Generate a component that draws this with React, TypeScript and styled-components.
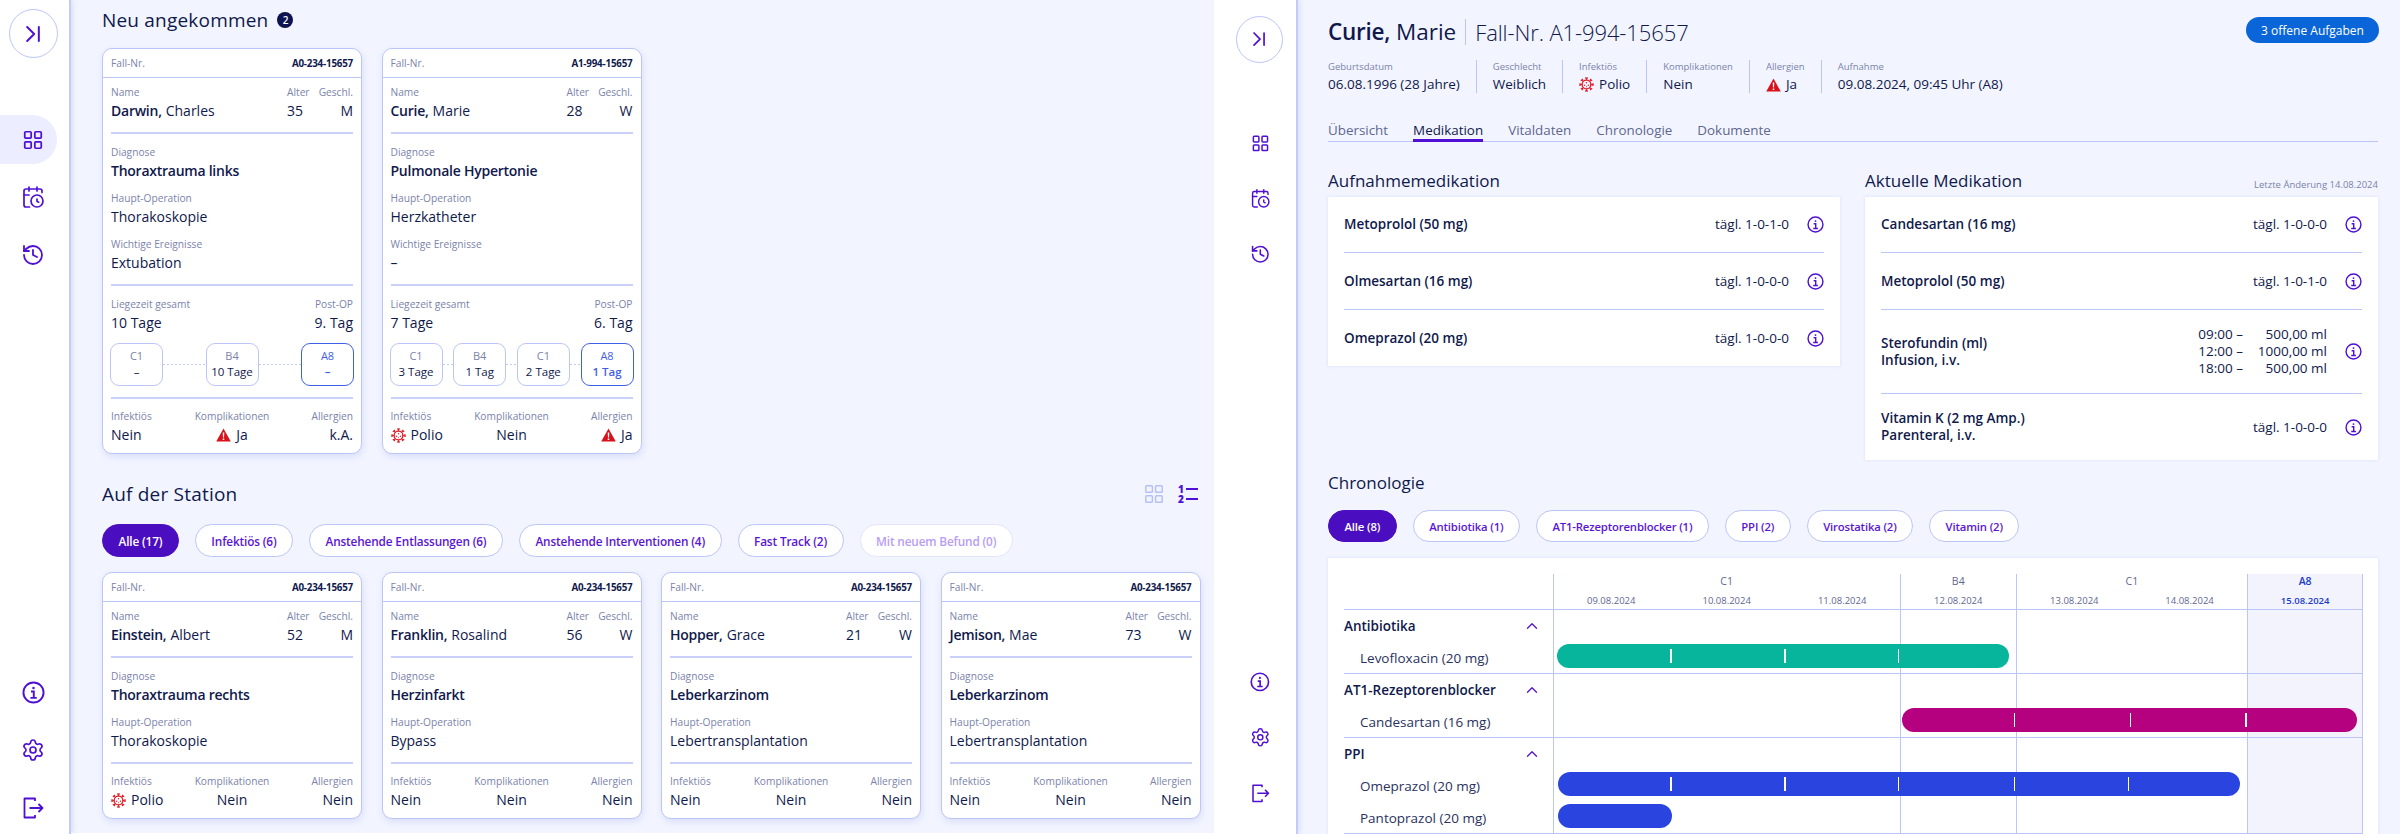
import React from "react";
import styled, { createGlobalStyle } from "styled-components";
import { CalendarClock, ChevronLast, ChevronUp, History, LayoutGrid, Settings } from "lucide-react";

const FONT = `"Open Sans", "Noto Sans", "Liberation Sans", sans-serif`;
const NAVY = "#10194c";
const LABEL = "#7b83aa";
const LINE = "#bcc5f8";
const PURPLE = "#4f10d4";
const BG = "#f2f5ff";

const Global = createGlobalStyle`
  html, body { margin: 0; padding: 0; background: #fff; }
  body { font-family: ${FONT}; color: ${NAVY}; width: 2400px; height: 834px; overflow: hidden; }
  * { box-sizing: border-box; }
`;

const Page = styled.div`
  display: flex;
  width: 2400px;
  height: 834px;
  overflow: hidden;
`;

const Panel = styled.section<{ $w: number }>`
  display: flex;
  flex: 0 0 ${(p) => p.$w}px;
  height: 100%;
  overflow: hidden;
`;

const Side = styled.aside<{ $w: number; $top: number; $bottom: number }>`
  flex: 0 0 ${(p) => p.$w}px;
  min-width: 0;
  display: flex;
  flex-direction: column;
  padding-top: ${(p) => p.$top}px;
  padding-bottom: ${(p) => p.$bottom}px;
  background: #fff;
  border-right: 2px solid #c3cbf7;
  box-shadow: 2px 0 5px rgba(120, 130, 220, 0.18);
  z-index: 1;
`;

const Collapse = styled.button<{ $d: number; $x: number }>`
  width: ${(p) => p.$d}px;
  height: ${(p) => p.$d}px;
  margin-left: ${(p) => p.$x}px;
  border: 1.5px solid ${LINE};
  border-radius: 50%;
  background: #fff;
  color: ${PURPLE};
  display: flex;
  align-items: center;
  justify-content: center;
  padding: 0;
`;

const Nav = styled.nav<{ $gap: number; $mt?: number; $auto?: boolean }>`
  display: flex;
  flex-direction: column;
  gap: ${(p) => p.$gap}px;
  margin-top: ${(p) => (p.$auto ? "auto" : `${p.$mt}px`)};
`;

const NavItem = styled.div<{ $active?: boolean; $w: number; $h: number; $pl: number }>`
  width: ${(p) => p.$w}px;
  height: ${(p) => p.$h}px;
  padding-left: ${(p) => p.$pl}px;
  display: flex;
  align-items: center;
  justify-content: center;
  color: ${PURPLE};
  background: ${(p) => (p.$active ? "#ecedfe" : "transparent")};
  border-radius: 0 25px 25px 0;
`;

const Main = styled.main`
  flex: 1;
  min-width: 0;
  background: ${BG};
`;

const LeftMain = styled(Main)`
  padding: 7px 0 0 31px;
  height: 833px;
`;

const SectionHead = styled.div`
  display: flex;
  align-items: center;
  height: 26px;
  gap: 9px;
`;

const H1 = styled.h2`
  margin: 0;
  font-size: 19px;
  line-height: 26px;
  font-weight: 400;
  color: ${NAVY};
  letter-spacing: 0.2px;
`;

const CountBadge = styled.span`
  width: 16px;
  height: 16px;
  border-radius: 50%;
  background: #0c1350;
  color: #fff;
  font-size: 10px;
  font-weight: 600;
  display: flex;
  align-items: center;
  justify-content: center;
`;

const CardRow = styled.div`
  display: flex;
  gap: 19.5px;
  margin-top: 15px;
`;

const Card = styled.article`
  width: 260px;
  background: #fff;
  border: 1px solid ${LINE};
  border-radius: 10px;
  box-shadow: 1px 3px 7px rgba(110, 120, 210, 0.18);
`;

const CardHeader = styled.header`
  height: 29px;
  padding: 0 8px;
  border-bottom: 1px solid ${LINE};
  display: flex;
  align-items: center;
  justify-content: space-between;
`;

const Label = styled.div<{ $align?: string }>`
  font-size: 10.2px;
  line-height: 14px;
  color: ${LABEL};
  white-space: nowrap;
  text-align: ${(p) => p.$align || "left"};
`;

const CaseNo = styled.span`
  font-size: 9.8px;
  font-weight: 700;
  letter-spacing: -0.2px;
  color: ${NAVY};
`;

const Value = styled.div<{ $align?: string; $strong?: boolean }>`
  font-size: 14px;
  line-height: 20px;
  margin-top: 2px;
  color: ${NAVY};
  font-weight: ${(p) => (p.$strong ? 600 : 400)};
  letter-spacing: ${(p) => (p.$strong ? "-0.25px" : "0")};
  white-space: nowrap;
  text-align: ${(p) => p.$align || "left"};
  display: flex;
  align-items: center;
  gap: 5px;
  justify-content: ${(p) => (p.$align === "right" ? "flex-end" : p.$align === "center" ? "center" : "flex-start")};
`;

const Strong = styled.b`
  font-weight: 600;
  letter-spacing: -0.25px;
`;

const NameValue = styled(Value)`
  gap: 4px;
`;

const NameGrid = styled.div`
  display: grid;
  grid-template-columns: 1fr 33px 33px;
  padding: 7px 8px 11px;
  & > div:nth-child(3n) { justify-self: end; }
`;

const Block = styled.div<{ $pt?: number; $pb?: number }>`
  margin: 0 8px;
  padding: ${(p) => p.$pt ?? 11}px 0 ${(p) => p.$pb ?? 11}px;
  border-top: 2px solid #c9d0fb;
`;

const Field = styled.div`
  & + & { margin-top: 10px; }
`;

const Split = styled.div`
  display: flex;
  justify-content: space-between;
`;

const Stations = styled.div`
  display: flex;
  align-items: center;
  margin: 10px -1px 0;
`;

const Link = styled.span`
  flex: 1;
  height: 1.5px;
  background: repeating-linear-gradient(90deg, #c2caf9 0 2px, transparent 2px 4px);
`;

const Stop = styled.div<{ $on?: boolean }>`
  flex: 0 0 53px;
  height: 43px;
  border: ${(p) => (p.$on ? "1.5px solid #3f5fe6" : `1px solid ${LINE}`)};
  border-radius: 9px;
  text-align: center;
  color: ${(p) => (p.$on ? "#3f5fe6" : LABEL)};
  font-size: 11px;
  line-height: 14px;
  padding-top: 5px;
`;

const StopVal = styled.div<{ $on?: boolean }>`
  font-size: 11.5px;
  line-height: 18px;
  color: ${(p) => (p.$on ? "#3f5fe6" : NAVY)};
  font-weight: ${(p) => (p.$on ? 600 : 400)};
`;

const Triple = styled.div`
  display: grid;
  grid-template-columns: 1fr auto 1fr;
  margin: 0 8px;
  padding: 10px 0 8px;
  border-top: 2px solid #c9d0fb;
`;

const HeadRow = styled(SectionHead)`
  margin-top: 27px;
  justify-content: space-between;
  padding-right: 3px;
  width: 1099px;
`;

const Toggles = styled.div`
  display: flex;
  align-items: center;
  gap: 15px;
`;

const NumList = styled.div`
  width: 20px;
  display: grid;
  grid-template-columns: 8px 12px;
  grid-auto-rows: 10px;
  align-items: center;
  font-size: 10px;
  line-height: 10px;
  font-weight: 800;
  color: ${PURPLE};
`;

const NumLine = styled.i`
  display: block;
  height: 1.5px;
  background: ${PURPLE};
`;

const Pills = styled.div<{ $mt: number; $gap: number }>`
  display: flex;
  gap: ${(p) => p.$gap}px;
  margin-top: ${(p) => p.$mt}px;
`;

const Pill = styled.button<{ $on?: boolean; $off?: boolean; $h: number; $fs: number }>`
  height: ${(p) => p.$h}px;
  padding: 0 15.5px;
  border-radius: 20px;
  font-family: ${FONT};
  font-size: ${(p) => p.$fs}px;
  font-weight: 600;
  letter-spacing: -0.15px;
  white-space: nowrap;
  border: 1.5px solid ${(p) => (p.$on ? "#4b0dc0" : p.$off ? "#e2e5fb" : LINE)};
  background: ${(p) => (p.$on ? "#4b0dc0" : "#fff")};
  color: ${(p) => (p.$on ? "#fff" : p.$off ? "#b89df4" : "#5a16d4")};
`;

const RightMain = styled(Main)`
  padding: 17px 22px 0 30px;
  height: 834px;
`;

const TitleRow = styled.div`
  display: flex;
  justify-content: space-between;
  align-items: flex-start;
`;

const Title = styled.h1`
  margin: 0;
  font-size: 22.5px;
  line-height: 30px;
  font-weight: 400;
  display: flex;
  align-items: center;
  color: ${NAVY};
`;

const TitleCase = styled.span`
  font-weight: 300;
  font-size: 22px;
  letter-spacing: -0.1px;
  margin-left: 9px;
  padding-left: 9px;
  border-left: 1px solid ${LINE};
  line-height: 26px;
`;

const TaskBadge = styled.span`
  height: 26px;
  width: 133px;
  margin-right: -1px;
  border-radius: 13px;
  background: #0a66d8;
  color: #fff;
  font-size: 12px;
  font-weight: 500;
  display: flex;
  align-items: center;
  justify-content: center;
`;

const Meta = styled.div`
  display: flex;
  margin-top: 13px;
`;

const MetaCol = styled.div`
  height: 33px;
  padding: 0 16px;
  border-left: 1px solid ${LINE};
  &:first-child { padding-left: 0; border-left: 0; }
`;

const MetaLabel = styled(Label)`
  font-size: 9.5px;
`;

const MetaValue = styled(Value)`
  font-size: 13.5px;
  line-height: 19px;
  margin-top: 1px;
`;

const Tabs = styled.div`
  display: flex;
  gap: 25px;
  margin-top: 27px;
  border-bottom: 1px solid ${LINE};
`;

const Tab = styled.div<{ $on?: boolean }>`
  font-size: 13.4px;
  line-height: 20px;
  color: ${(p) => (p.$on ? NAVY : "#5f678f")};
  font-weight: ${(p) => (p.$on ? 500 : 400)};
  box-shadow: ${(p) => (p.$on ? `0 1px 0 ${PURPLE}, inset 0 -2px 0 ${PURPLE}` : "none")};
  height: 21px;
`;

const MedColumns = styled.div`
  display: grid;
  grid-template-columns: 512px 513px;
  column-gap: 25px;
  align-items: start;
  margin-top: 27px;
`;

const H2Row = styled.div`
  display: flex;
  justify-content: space-between;
  align-items: flex-end;
  height: 24px;
`;

const ChronoHead = styled(H2Row)`
  margin-top: 11px;
`;

const H2 = styled.h3`
  margin: 0;
  font-size: 17px;
  line-height: 24px;
  font-weight: 400;
  color: ${NAVY};
`;

const Stamp = styled(Label)`
  font-size: 9.5px;
  line-height: 16px;
`;

const MedCard = styled.div`
  margin-top: 4px;
  background: #fff;
  padding: 0 16px;
  box-shadow: 0 0 3px rgba(140, 150, 220, 0.25);
`;

const MedRow = styled.div`
  min-height: 55px;
  padding: 16px 0;
  display: flex;
  align-items: center;
  gap: 18px;
  font-size: 13.5px;
  line-height: 17px;
  & + & { border-top: 1px solid ${LINE}; min-height: 57px; }
`;

const MedName = styled.div`
  flex: 1;
  font-weight: 600;
`;

const Times = styled.div`
  display: grid;
  grid-template-columns: auto 84px;
  text-align: right;
`;

const ChartBox = styled.div`
  margin-top: 16px;
  background: #fff;
  padding: 16px 15px 0 16px;
  box-shadow: 0 0 3px rgba(140, 150, 220, 0.25);
`;

const ChartHead = styled.div`
  display: grid;
  grid-template-columns: 208.5px 3fr 1fr 2fr 1fr;
  height: 36px;
  border-bottom: 1px solid ${LINE};
`;

const WardHead = styled.div<{ $on?: boolean; $end?: boolean }>`
  border-left: 1px solid ${LINE};
  border-right: ${(p) => (p.$end ? `1px solid ${LINE}` : "0")};
  background: ${(p) => (p.$on ? "#f2f3fd" : "transparent")};
  color: ${(p) => (p.$on ? "#1c3cc8" : "#5f678f")};
  font-weight: ${(p) => (p.$on ? 600 : 400)};
  text-align: center;
  font-size: 10.5px;
  line-height: 14px;
  padding-top: 0;
`;

const Days = styled.div`
  display: flex;
  margin-top: 6px;
  font-size: 9.5px;
  & > span { flex: 1; }
`;

const ChartRow = styled.div<{ $end?: boolean }>`
  display: flex;
  height: 32px;
  border-bottom: ${(p) => (p.$end ? `1px solid ${LINE}` : "0")};
`;

const RowLabel = styled.div<{ $group?: boolean }>`
  flex: 0 0 208.5px;
  display: flex;
  align-items: center;
  justify-content: space-between;
  padding-left: ${(p) => (p.$group ? 0 : 16)}px;
  padding-right: 12px;
  font-size: 13.5px;
  font-weight: ${(p) => (p.$group ? 600 : 400)};
  color: ${(p) => (p.$group ? NAVY : "#2a3160")};
  white-space: nowrap;
`;

const Track = styled.div`
  flex: 1;
  position: relative;
`;

const Guides = styled.div`
  position: absolute;
  inset: 0;
  display: grid;
  grid-template-columns: 3fr 1fr 2fr 1fr;
`;

const Guide = styled.div<{ $on?: boolean; $end?: boolean }>`
  border-left: 1px solid ${LINE};
  border-right: ${(p) => (p.$end ? `1px solid ${LINE}` : "0")};
  background: ${(p) => (p.$on ? "#f2f3fd" : "transparent")};
`;

const Bar = styled.div<{ $c: string }>`
  position: absolute;
  top: 2px;
  height: 24px;
  border-radius: 12px;
  background: ${(p) => p.$c};
`;

const Tick = styled.i`
  position: absolute;
  top: 5px;
  width: 1.5px;
  height: 14px;
  background: #fff;
`;

const Warning = () => (
  <svg width="15" height="14" viewBox="0 0 15 14" aria-hidden>
    <path d="M7.5 0.5 14.8 13.6H0.2Z" fill="#d8111b" />
    <path d="M6.7 4.6h1.6l-.25 5H6.95Z M6.7 10.4h1.6v1.5H6.7Z" fill="#fff" />
  </svg>
);

const Virus = ({ size = 15 }: { size?: number }) => (
  <svg width={size} height={size} viewBox="0 0 24 24" fill="none" stroke="#e0222c" aria-hidden>
    <circle cx="12" cy="12" r="7" strokeWidth="2.2" />
    {[0, 45, 90, 135, 180, 225, 270, 315].map((a) => (
      <g key={a} transform={`rotate(${a} 12 12)`}>
        <path d="M12 5V1.8" strokeWidth="2" />
        <path d="M9.8 1.6h4.4" strokeWidth="2.2" />
      </g>
    ))}
    <circle cx="12" cy="9" r="1.2" fill="#e0222c" stroke="none" />
    <circle cx="9" cy="13" r="1.2" fill="#e0222c" stroke="none" />
    <circle cx="15" cy="13" r="1.2" fill="#e0222c" stroke="none" />
    <circle cx="12" cy="15.5" r="0.9" fill="#e0222c" stroke="none" />
  </svg>
);

const InfoIcon = ({ size = 22 }: { size?: number }) => (
  <svg width={size} height={size} viewBox="0 0 24 24" fill="none" stroke={PURPLE} strokeWidth="2" aria-hidden>
    <circle cx="12" cy="12" r="10.5" />
    <circle cx="12" cy="7.2" r="1.3" fill={PURPLE} stroke="none" />
    <path d="M9.4 11h2.9v6.4M8.8 17.6h6.6" />
  </svg>
);

const DoorIcon = ({ size = 24 }: { size?: number }) => (
  <svg width={size} height={size} viewBox="0 0 24 24" fill="none" stroke={PURPLE} strokeWidth="1.8" aria-hidden>
    <path d="M14 5V2.5H3.5v19H14V19" strokeLinejoin="round" />
    <path d="M8.5 12H21.5M17.5 8l4 4-4 4" strokeLinejoin="round" />
  </svg>
);

const GridToggle = () => (
  <svg width="18" height="18" viewBox="0 0 18 18" fill="none" stroke="#b7c0f5" strokeWidth="1.5" aria-hidden>
    <rect x="0.8" y="0.8" width="6.6" height="6.4" rx="0.8" />
    <rect x="10.6" y="0.8" width="6.6" height="6.4" rx="0.8" />
    <rect x="0.8" y="10.8" width="6.6" height="6.4" rx="0.8" />
    <rect x="10.6" y="10.8" width="6.6" height="6.4" rx="0.8" />
  </svg>
);

type SideProps = { w: number; top: number; bottom: number; d: number; x: number; mt: number; gap: number; item: number; active?: boolean; iconW: number; pl: number; scale: number };

const Sidebar = ({ w, top, bottom, d, x, mt, gap, item, active, iconW, pl, scale }: SideProps) => (
  <Side $w={w} $top={top} $bottom={bottom}>
    <Collapse $d={d} $x={x}>
      <ChevronLast size={28 * scale} strokeWidth={1.7} />
    </Collapse>
    <Nav $gap={gap} $mt={mt}>
      <NavItem $active={active} $w={active ? 57 : iconW} $pl={active ? 9 : pl} $h={item}>
        <LayoutGrid size={22 * scale} strokeWidth={1.9} />
      </NavItem>
      <NavItem $w={iconW} $pl={pl} $h={item}>
        <CalendarClock size={24 * scale} strokeWidth={1.7} />
      </NavItem>
      <NavItem $w={iconW} $pl={pl} $h={item}>
        <History size={24 * scale} strokeWidth={1.8} />
      </NavItem>
    </Nav>
    <Nav $gap={gap} $auto>
      <NavItem $w={iconW} $pl={pl} $h={item}><InfoIcon size={23 * scale} /></NavItem>
      <NavItem $w={iconW} $pl={pl} $h={item}><Settings size={24 * scale} strokeWidth={1.7} /></NavItem>
      <NavItem $w={iconW} $pl={pl} $h={item}><DoorIcon size={24 * scale} /></NavItem>
    </Nav>
  </Side>
);

type Stay = { ward: string; val: string; on?: boolean };
type Patient = {
  no: string; last: string; first: string; age: number; sex: string; dx: string; op: string;
  event?: string; total?: string; post?: string; stays?: Stay[];
  inf: React.ReactNode; comp: React.ReactNode; all: React.ReactNode;
};

const WarnJa = () => (<><Warning />Ja</>);
const Polio = () => (<><Virus />Polio</>);

const PatientCard = ({ p }: { p: Patient }) => (
  <Card>
    <CardHeader>
      <Label>Fall-Nr.</Label>
      <CaseNo>{p.no}</CaseNo>
    </CardHeader>
    <NameGrid>
      <Label>Name</Label>
      <Label>Alter</Label>
      <Label>Geschl.</Label>
      <NameValue><Strong>{p.last},</Strong><span>{p.first}</span></NameValue>
      <Value>{p.age}</Value>
      <Value>{p.sex}</Value>
    </NameGrid>
    <Block>
      <Field>
        <Label>Diagnose</Label>
        <Value $strong>{p.dx}</Value>
      </Field>
      <Field>
        <Label>Haupt-Operation</Label>
        <Value>{p.op}</Value>
      </Field>
      {p.event && (
        <Field>
          <Label>Wichtige Ereignisse</Label>
          <Value>{p.event}</Value>
        </Field>
      )}
    </Block>
    {p.stays && (
      <Block>
        <Split>
          <div>
            <Label>Liegezeit gesamt</Label>
            <Value>{p.total}</Value>
          </div>
          <div>
            <Label $align="right">Post-OP</Label>
            <Value $align="right">{p.post}</Value>
          </div>
        </Split>
        <Stations>
          {p.stays.map((s, i) => (
            <React.Fragment key={i}>
              {i > 0 && <Link />}
              <Stop $on={s.on}>
                {s.ward}
                <StopVal $on={s.on}>{s.val}</StopVal>
              </Stop>
            </React.Fragment>
          ))}
        </Stations>
      </Block>
    )}
    <Triple>
      <div>
        <Label>Infektiös</Label>
        <Value>{p.inf}</Value>
      </div>
      <div>
        <Label $align="center">Komplikationen</Label>
        <Value $align="center">{p.comp}</Value>
      </div>
      <div>
        <Label $align="right">Allergien</Label>
        <Value $align="right">{p.all}</Value>
      </div>
    </Triple>
  </Card>
);

const NEW: Patient[] = [
  {
    no: "A0-234-15657", last: "Darwin", first: "Charles", age: 35, sex: "M", dx: "Thoraxtrauma links", op: "Thorakoskopie",
    event: "Extubation", total: "10 Tage", post: "9. Tag",
    stays: [{ ward: "C1", val: "–" }, { ward: "B4", val: "10 Tage" }, { ward: "A8", val: "–", on: true }],
    inf: "Nein", comp: <WarnJa />, all: "k.A.",
  },
  {
    no: "A1-994-15657", last: "Curie", first: "Marie", age: 28, sex: "W", dx: "Pulmonale Hypertonie", op: "Herzkatheter",
    event: "–", total: "7 Tage", post: "6. Tag",
    stays: [{ ward: "C1", val: "3 Tage" }, { ward: "B4", val: "1 Tag" }, { ward: "C1", val: "2 Tage" }, { ward: "A8", val: "1 Tag", on: true }],
    inf: <Polio />, comp: "Nein", all: <WarnJa />,
  },
];

const WARD: Patient[] = [
  { no: "A0-234-15657", last: "Einstein", first: "Albert", age: 52, sex: "M", dx: "Thoraxtrauma rechts", op: "Thorakoskopie", inf: <Polio />, comp: "Nein", all: "Nein" },
  { no: "A0-234-15657", last: "Franklin", first: "Rosalind", age: 56, sex: "W", dx: "Herzinfarkt", op: "Bypass", inf: "Nein", comp: "Nein", all: "Nein" },
  { no: "A0-234-15657", last: "Hopper", first: "Grace", age: 21, sex: "W", dx: "Leberkarzinom", op: "Lebertransplantation", inf: "Nein", comp: "Nein", all: "Nein" },
  { no: "A0-234-15657", last: "Jemison", first: "Mae", age: 73, sex: "W", dx: "Leberkarzinom", op: "Lebertransplantation", inf: "Nein", comp: "Nein", all: "Nein" },
];

const LEFT_PILLS = ["Alle (17)", "Infektiös (6)", "Anstehende Entlassungen (6)", "Anstehende Interventionen (4)", "Fast Track (2)", "Mit neuem Befund (0)"];
const CHRONO_PILLS = ["Alle (8)", "Antibiotika (1)", "AT1-Rezeptorenblocker (1)", "PPI (2)", "Virostatika (2)", "Vitamin (2)"];

const MedLine = ({ name, dose }: { name: React.ReactNode; dose: React.ReactNode }) => (
  <MedRow>
    <MedName>{name}</MedName>
    <div>{dose}</div>
    <InfoIcon size={17} />
  </MedRow>
);

const WARDS = [
  { name: "C1", days: ["09.08.2024", "10.08.2024", "11.08.2024"] },
  { name: "B4", days: ["12.08.2024"] },
  { name: "C1", days: ["13.08.2024", "14.08.2024"] },
  { name: "A8", days: ["15.08.2024"], on: true },
];

type BarData = { from: number; to: number; c: string; ticks: number[] };
type Row = { label: string; group?: boolean; end?: boolean; bar?: BarData };

const ROWS: Row[] = [
  { label: "Antibiotika", group: true },
  { label: "Levofloxacin (20 mg)", end: true, bar: { from: 4.5, to: 456.5, c: "#06b59b", ticks: [117.5, 231.5, 345] } },
  { label: "AT1-Rezeptorenblocker", group: true },
  { label: "Candesartan (16 mg)", end: true, bar: { from: 349.5, to: 804.5, c: "#b5007f", ticks: [461, 577, 692.5] } },
  { label: "PPI", group: true },
  { label: "Omeprazol (20 mg)", bar: { from: 5, to: 687.5, c: "#2a44e0", ticks: [117.5, 231.5, 345, 461, 575] } },
  { label: "Pantoprazol (20 mg)", end: true, bar: { from: 5.5, to: 119.5, c: "#2a44e0", ticks: [] } },
];

export default function App() {
  return (
    <Page>
      <Global />
      <Panel $w={1214}>
        <Sidebar w={71} top={9} bottom={2} d={49} x={8.5} mt={57} gap={8.5} item={49} active iconW={66} pl={0} scale={1} />
        <LeftMain>
          <SectionHead>
            <H1>Neu angekommen</H1>
            <CountBadge>2</CountBadge>
          </SectionHead>
          <CardRow>
            {NEW.map((p) => <PatientCard key={p.no} p={p} />)}
          </CardRow>
          <HeadRow>
            <H1>Auf der Station</H1>
            <Toggles>
              <GridToggle />
              <NumList>
                1<NumLine />
                2<NumLine />
              </NumList>
            </Toggles>
          </HeadRow>
          <Pills $mt={17} $gap={16}>
            {LEFT_PILLS.map((t, i) => <Pill key={t} $h={33} $fs={11.8} $on={i === 0} $off={i === 5}>{t}</Pill>)}
          </Pills>
          <CardRow>
            {WARD.map((p) => <PatientCard key={p.last} p={p} />)}
          </CardRow>
        </LeftMain>
      </Panel>
      <Panel $w={1186}>
        <Sidebar w={84} top={16} bottom={17} d={47} x={22} mt={56} gap={7.5} item={48} iconW={82} pl={10} scale={0.86} />
        <RightMain>
          <TitleRow>
            <Title>
              <Strong>Curie,</Strong>&nbsp;Marie
              <TitleCase>Fall-Nr. A1-994-15657</TitleCase>
            </Title>
            <TaskBadge>3 offene Aufgaben</TaskBadge>
          </TitleRow>
          <Meta>
            <MetaCol><MetaLabel>Geburtsdatum</MetaLabel><MetaValue>06.08.1996 (28 Jahre)</MetaValue></MetaCol>
            <MetaCol><MetaLabel>Geschlecht</MetaLabel><MetaValue>Weiblich</MetaValue></MetaCol>
            <MetaCol><MetaLabel>Infektiös</MetaLabel><MetaValue><Polio /></MetaValue></MetaCol>
            <MetaCol><MetaLabel>Komplikationen</MetaLabel><MetaValue>Nein</MetaValue></MetaCol>
            <MetaCol><MetaLabel>Allergien</MetaLabel><MetaValue><WarnJa /></MetaValue></MetaCol>
            <MetaCol><MetaLabel>Aufnahme</MetaLabel><MetaValue>09.08.2024, 09:45 Uhr (A8)</MetaValue></MetaCol>
          </Meta>
          <Tabs>
            <Tab>Übersicht</Tab>
            <Tab $on>Medikation</Tab>
            <Tab>Vitaldaten</Tab>
            <Tab>Chronologie</Tab>
            <Tab>Dokumente</Tab>
          </Tabs>
          <MedColumns>
            <div>
              <H2Row><H2>Aufnahmemedikation</H2></H2Row>
              <MedCard>
                <MedLine name="Metoprolol (50 mg)" dose="tägl. 1-0-1-0" />
                <MedLine name="Olmesartan (16 mg)" dose="tägl. 1-0-0-0" />
                <MedLine name="Omeprazol (20 mg)" dose="tägl. 1-0-0-0" />
              </MedCard>
            </div>
            <div>
              <H2Row><H2>Aktuelle Medikation</H2><Stamp>Letzte Änderung 14.08.2024</Stamp></H2Row>
              <MedCard>
                <MedLine name="Candesartan (16 mg)" dose="tägl. 1-0-0-0" />
                <MedLine name="Metoprolol (50 mg)" dose="tägl. 1-0-1-0" />
                <MedLine
                  name={<>Sterofundin (ml)<br />Infusion, i.v.</>}
                  dose={
                    <Times>
                      <span>09:00 –</span><span>500,00 ml</span>
                      <span>12:00 –</span><span>1000,00 ml</span>
                      <span>18:00 –</span><span>500,00 ml</span>
                    </Times>
                  }
                />
                <MedLine name={<>Vitamin K (2 mg Amp.)<br />Parenteral, i.v.</>} dose="tägl. 1-0-0-0" />
              </MedCard>
            </div>
          </MedColumns>
          <ChronoHead><H2>Chronologie</H2></ChronoHead>
          <Pills $mt={15} $gap={16}>
            {CHRONO_PILLS.map((t, i) => <Pill key={t} $h={32} $fs={11.3} $on={i === 0}>{t}</Pill>)}
          </Pills>
          <ChartBox>
            <ChartHead>
              <div />
              {WARDS.map((w, i) => (
                <WardHead key={i} $on={w.on} $end={i === 3}>
                  {w.name}
                  <Days>{w.days.map((d) => <span key={d}>{d}</span>)}</Days>
                </WardHead>
              ))}
            </ChartHead>
            {ROWS.map((r) => (
              <ChartRow key={r.label} $end={r.end}>
                <RowLabel $group={r.group}>
                  {r.label}
                  {r.group && <ChevronUp size={18} color={PURPLE} strokeWidth={1.6} />}
                </RowLabel>
                <Track>
                  <Guides>
                    <Guide /><Guide /><Guide /><Guide $on $end />
                  </Guides>
                  {r.bar && (
                    <Bar $c={r.bar.c} style={{ left: r.bar.from, width: r.bar.to - r.bar.from }}>
                      {r.bar.ticks.map((t) => <Tick key={t} style={{ left: t - r.bar!.from }} />)}
                    </Bar>
                  )}
                </Track>
              </ChartRow>
            ))}
          </ChartBox>
        </RightMain>
      </Panel>
    </Page>
  );
}
